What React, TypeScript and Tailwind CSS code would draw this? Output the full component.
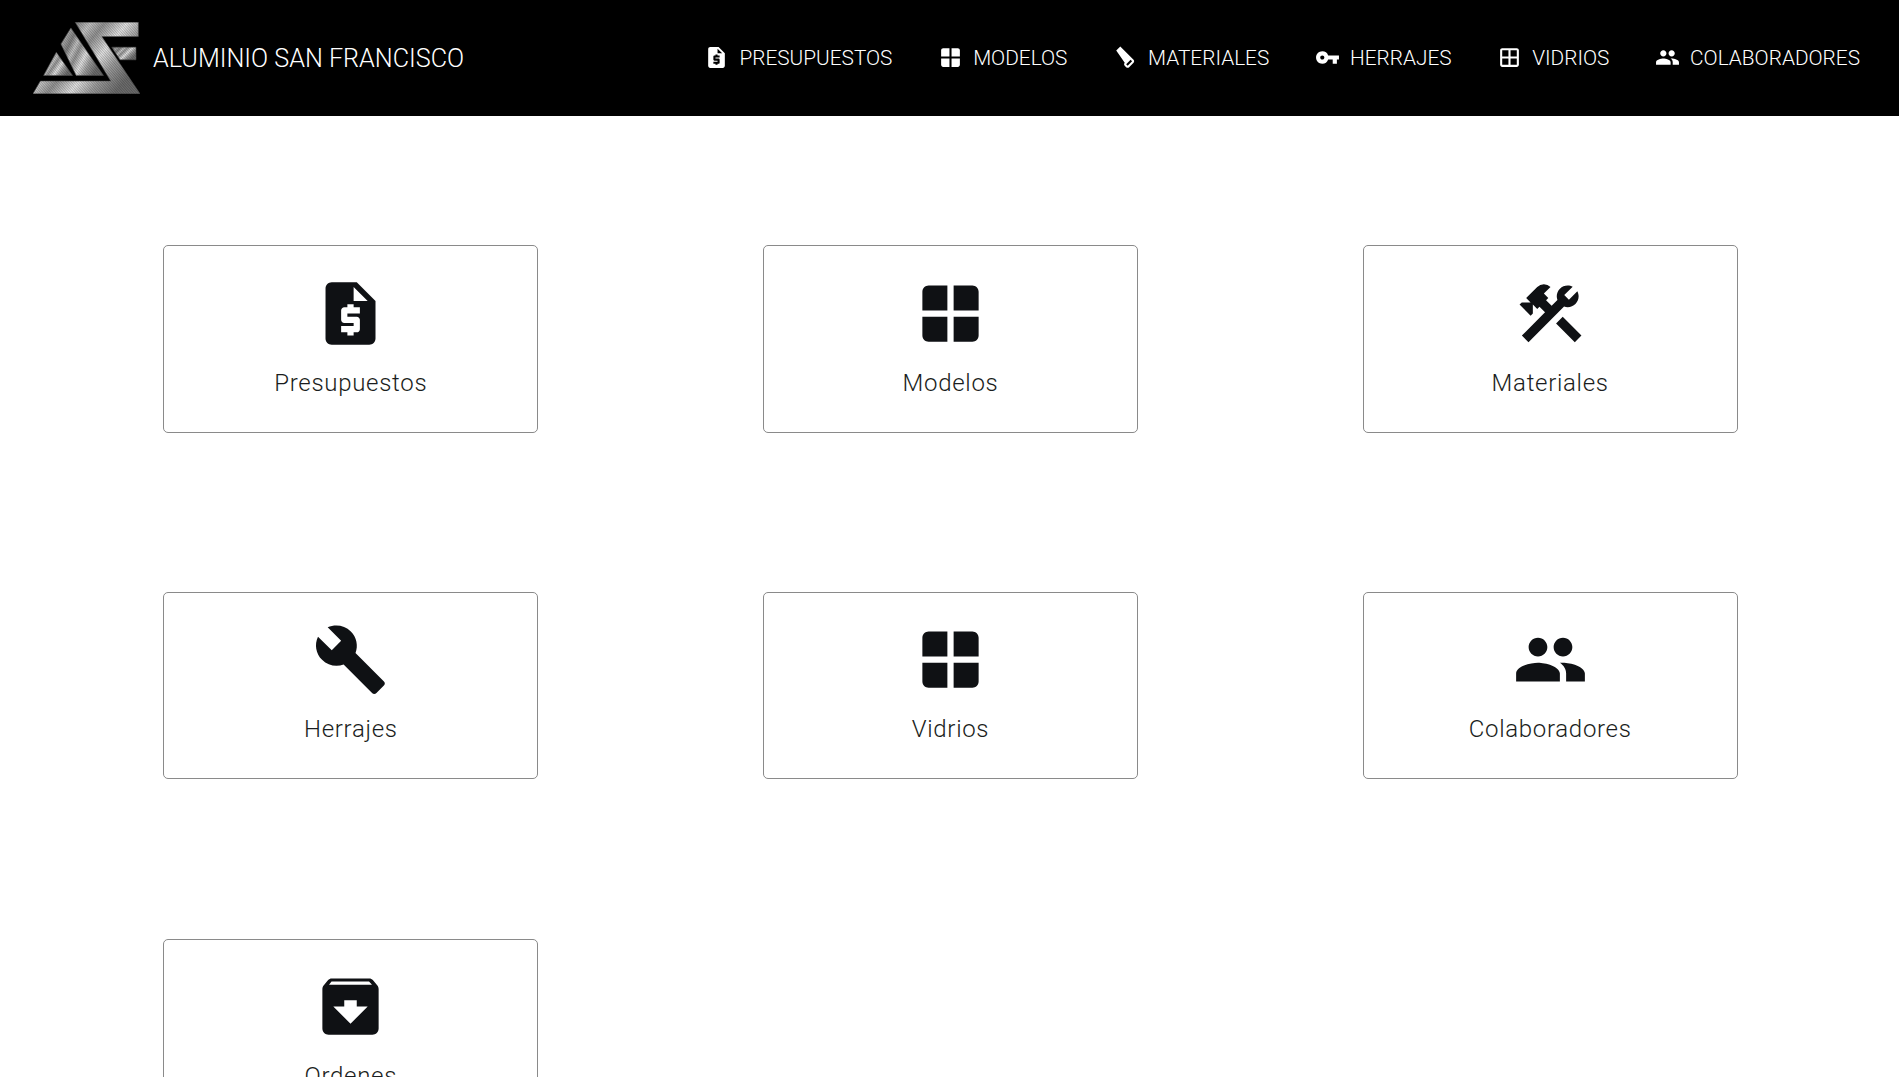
import type { IconType } from 'react-icons'
import {
  MdRequestQuote,
  MdWindow,
  MdCarpenter,
  MdConstruction,
  MdVpnKey,
  MdBuild,
  MdOutlineWindow,
  MdPeople,
  MdArchive,
} from 'react-icons/md'

const navItems: { label: string; icon: IconType }[] = [
  { label: 'PRESUPUESTOS', icon: MdRequestQuote },
  { label: 'MODELOS', icon: MdWindow },
  { label: 'MATERIALES', icon: MdCarpenter },
  { label: 'HERRAJES', icon: MdVpnKey },
  { label: 'VIDRIOS', icon: MdOutlineWindow },
  { label: 'COLABORADORES', icon: MdPeople },
]

const cards: { label: string; icon: IconType }[] = [
  { label: 'Presupuestos', icon: MdRequestQuote },
  { label: 'Modelos', icon: MdWindow },
  { label: 'Materiales', icon: MdConstruction },
  { label: 'Herrajes', icon: MdBuild },
  { label: 'Vidrios', icon: MdWindow },
  { label: 'Colaboradores', icon: MdPeople },
  { label: 'Ordenes', icon: MdArchive },
]

function Logo() {
  return (
    <svg viewBox="38 35 322 215" className="w-[107px] h-[72px] shrink-0">
      <defs>
        <linearGradient id="metal" x1="0" y1="0" x2="1" y2="0.55">
          <stop offset="0" stopColor="#5c5c5c" />
          <stop offset="0.18" stopColor="#a8a8a8" />
          <stop offset="0.3" stopColor="#808080" />
          <stop offset="0.42" stopColor="#c8c8c8" />
          <stop offset="0.52" stopColor="#949494" />
          <stop offset="0.68" stopColor="#e8e8e8" />
          <stop offset="0.82" stopColor="#a0a0a0" />
          <stop offset="1" stopColor="#6e6e6e" />
        </linearGradient>
        <pattern id="brush" width="4" height="4" patternUnits="userSpaceOnUse" patternTransform="rotate(58)">
          <rect width="2" height="4" fill="#000" fillOpacity="0.22" />
        </pattern>
      </defs>
      <g stroke="#555" strokeWidth="1.5">
        <polygon fill="url(#metal)" points="165,35 355,35 355,78 245,78 360,250 38,250 60,212 272,212" />
        <polygon fill="url(#metal)" points="275,110 348,110 348,148 300,148" />
        <polygon fill="url(#metal)" points="152,52 250,195 168,195 122,100" />
        <polygon fill="url(#metal)" points="108,125 157,195 70,195" />
      </g>
      <g fill="url(#brush)">
        <polygon points="165,35 355,35 355,78 245,78 360,250 38,250 60,212 272,212" />
        <polygon points="275,110 348,110 348,148 300,148" />
        <polygon points="152,52 250,195 168,195 122,100" />
        <polygon points="108,125 157,195 70,195" />
      </g>
    </svg>
  )
}

export default function App() {
  return (
    <div className="h-[1077px] overflow-hidden bg-white font-['Roboto',sans-serif]">
      <header className="h-[116px] bg-black flex items-center justify-between pl-[33px] pr-[39px]">
        <div className="flex items-center gap-[13px]">
          <Logo />
          <span className="pt-[2px] text-white text-[25.2px] font-light">ALUMINIO SAN FRANCISCO</span>
        </div>
        <nav className="flex items-center gap-[45.7px]">
          {navItems.map((item) => (
            <a key={item.label} className="flex items-center gap-[10px] text-white text-[20.8px] font-light">
              <item.icon className="w-[25px] h-[25px] mb-[2px]" />
              <span className="pt-[2px]">{item.label}</span>
            </a>
          ))}
        </nav>
      </header>

      <main className="grid grid-cols-3 gap-y-[159.3px] pl-[51px] pr-[49px] pt-[129px]">
        {cards.map((card) => (
          <div key={card.label} className="flex justify-center">
            <div className="w-[375px] h-[187.5px] border border-[#8a8a8a] rounded-[5px] flex flex-col items-center pt-[29.5px] text-[#0f1114]">
              <card.icon className="w-[75px] h-[75px]" />
              <span className="mt-[14px] text-[24px] font-light tracking-[0.7px] text-[#1a1d20]">{card.label}</span>
            </div>
          </div>
        ))}
      </main>
    </div>
  )
}
